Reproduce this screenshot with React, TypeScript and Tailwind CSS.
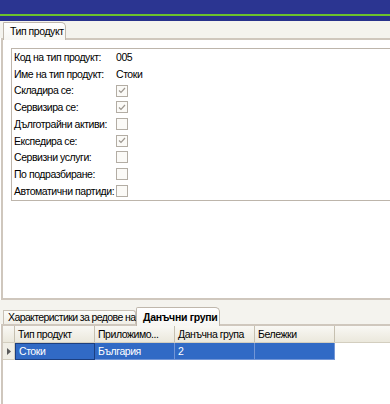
const rows: { label: string; value?: string; checked?: boolean }[] = [
  { label: "Код на тип продукт:", value: "005" },
  { label: "Име на тип продукт:", value: "Стоки" },
  { label: "Складира се:", checked: true },
  { label: "Сервизира се:", checked: true },
  { label: "Дълготрайни активи:", checked: false },
  { label: "Експедира се:", checked: true },
  { label: "Сервизни услуги:", checked: false },
  { label: "По подразбиране:", checked: false },
  { label: "Автоматични партиди:", checked: false },
];

const columns = ["Тип продукт", "Приложимо...", "Данъчна група", "Бележки"];
const cells = ["Стоки", "България", "2", ""];

const CheckBox = ({ checked }: { checked: boolean }) => (
  <div className="w-[12px] h-[12px] border border-[#b3ada4] bg-[#fbfaf7] flex items-center justify-center">
    {checked && (
      <svg width="8" height="7" viewBox="0 0 8 7">
        <path d="M1 3.5 L3 5.5 L7 1" fill="none" stroke="#9d978f" strokeWidth="1.2" />
      </svg>
    )}
  </div>
);

export default function App() {
  return (
    <div className="w-[390px] h-[404px] overflow-hidden bg-white flex flex-col text-[10.5px] tracking-[-0.45px] leading-none text-black font-['Liberation_Sans',Arial,sans-serif]">
      {/* window strip */}
      <div className="h-[14px] shrink-0 bg-[#2b3591]" />
      <div className="h-[2px] shrink-0 bg-[#6cc12c]" />
      <div className="h-[5px] shrink-0 bg-[#27318b]" />

      {/* top tabs */}
      <div className="h-[17px] shrink-0 bg-[#f4f3ee] flex items-end pl-[3px]">
        <div className="relative z-10 -mb-[2px] h-[18px] w-[63px] flex items-center pl-[6px] border border-b-0 border-[#bfb7ac] rounded-tr-[5px] rounded-tl-[1px] bg-gradient-to-b from-white to-[#f7f6f2] whitespace-nowrap">
          Тип продукт
        </div>
      </div>

      {/* top page */}
      <div className="h-[262px] shrink-0 ml-[1px] border-l-2 border-t-2 border-b-2 border-[#cfc7bd] bg-white pt-[8px] pl-[8px]">
        <div className="border border-r-0 border-[#bdb5ab] pb-[1px]">
          {rows.map((r) => (
            <div key={r.label} className="h-[16.7px] flex items-center">
              <div className="w-[104px] pl-[2px] whitespace-nowrap">{r.label}</div>
              <div>
                {r.value !== undefined ? r.value : <CheckBox checked={!!r.checked} />}
              </div>
            </div>
          ))}
        </div>
      </div>

      {/* bottom tabs */}
      <div className="h-[24px] shrink-0 bg-[#f4f3ee] flex items-end pl-[3px]">
        <div className="h-[14px] w-[133px] flex items-center pl-[4px] border border-b-0 border-[#c9c1b6] rounded-tr-[3px] bg-gradient-to-b from-[#fcfcfa] to-[#f0eee6] tracking-[-0.6px] whitespace-nowrap">
          Характеристики за редове на
        </div>
        <div className="relative z-10 -mb-[2px] h-[19px] w-[84px] flex items-center pl-[6px] border border-b-0 border-[#bfb7ac] rounded-tr-[5px] rounded-tl-[2px] bg-gradient-to-b from-white to-[#f7f6f2] font-bold tracking-[-0.3px] whitespace-nowrap">
          Данъчни групи
        </div>
      </div>

      {/* bottom page with grid */}
      <div className="flex-1 ml-[1px] border-l-2 border-t-2 border-[#cfc7bd] bg-white">
        <div className="flex h-[17px] bg-gradient-to-b from-[#f9f8f4] to-[#ebe8dc] border-b border-[#d3cebf]">
          <div className="w-[12px] border-r border-[#c6c0b0]" />
          {columns.map((c) => (
            <div key={c} className="w-[80px] flex items-center pl-[3px] border-r border-[#c6c0b0] whitespace-nowrap">
              {c}
            </div>
          ))}
          <div className="flex-1" />
        </div>
        <div className="flex h-[17px]">
          <div className="w-[12px] bg-[#f0eee6] border-r border-b border-[#d3cebf] flex items-center justify-center">
            <svg width="4" height="7" viewBox="0 0 4 7">
              <path d="M0 0 L4 3.5 L0 7 Z" fill="#5a5a5a" />
            </svg>
          </div>
          {cells.map((c, i) => (
            <div
              key={i}
              className={
                i === 0
                  ? "w-[80px] flex items-center pl-[3px] bg-[#316ac5] text-white border border-[#1c3f80]"
                  : "w-[80px] flex items-center pl-[3px] bg-[#316ac5] text-white border-r border-b border-[#7396d6]"
              }
            >
              {c}
            </div>
          ))}
        </div>
      </div>
    </div>
  );
}
